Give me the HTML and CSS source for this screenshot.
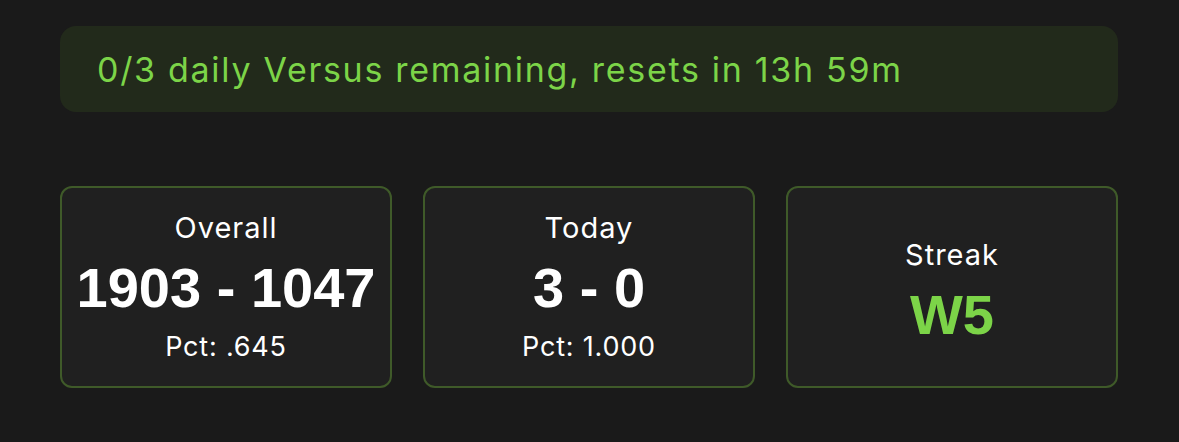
FILE: index.html
```html
<!DOCTYPE html>
<html>
<head>
    <title>Versus</title>
    <link rel="stylesheet" href="styles.css">
</head>
<body>
    <div class="page">
        <div class="banner">0/3 daily Versus remaining, resets in 13h 59m</div>
        <div class="stats">
            <div class="card">
                <div class="label">Overall</div>
                <div class="score">1903 - 1047</div>
                <div class="pct">Pct: .645</div>
            </div>
            <div class="card">
                <div class="label">Today</div>
                <div class="score">3 - 0</div>
                <div class="pct">Pct: 1.000</div>
            </div>
            <div class="card">
                <div class="label">Streak</div>
                <div class="score streak">W5</div>
            </div>
        </div>
    </div>
</body>
</html>
```

FILE: styles.css
```css
body {
    margin: 0;
    background-color: #1a1a1a;
    font-family: "Inter", "Noto Sans", sans-serif;
    color: #fff;
}
.page {
    padding: 26px 61px 0 60px;
}
.banner {
    background-color: #222a1b;
    border-radius: 16px;
    height: 86px;
    display: flex;
    align-items: center;
    padding: 0 37px;
    color: #7cd448;
    font-size: 34px;
    letter-spacing: 1.7px;
    box-sizing: border-box;
}
.stats {
    display: grid;
    grid-template-columns: repeat(3, 1fr);
    gap: 31px;
    margin-top: 74px;
}
.card {
    background-color: #202020;
    border: 2px solid #3f5a29;
    border-radius: 12px;
    height: 202px;
    box-sizing: border-box;
    display: flex;
    flex-direction: column;
    align-items: center;
    justify-content: center;
}
.label {
    font-size: 29px;
    letter-spacing: 1px;
    line-height: 56px;
}
.score {
    font-family: "Liberation Sans", Arial, sans-serif;
    font-weight: 900;
    font-size: 56px;
    line-height: 64px;
}
.streak {
    color: #7cd448;
}
.pct {
    font-size: 27px;
    letter-spacing: 0.8px;
    line-height: 54px;
}
```
